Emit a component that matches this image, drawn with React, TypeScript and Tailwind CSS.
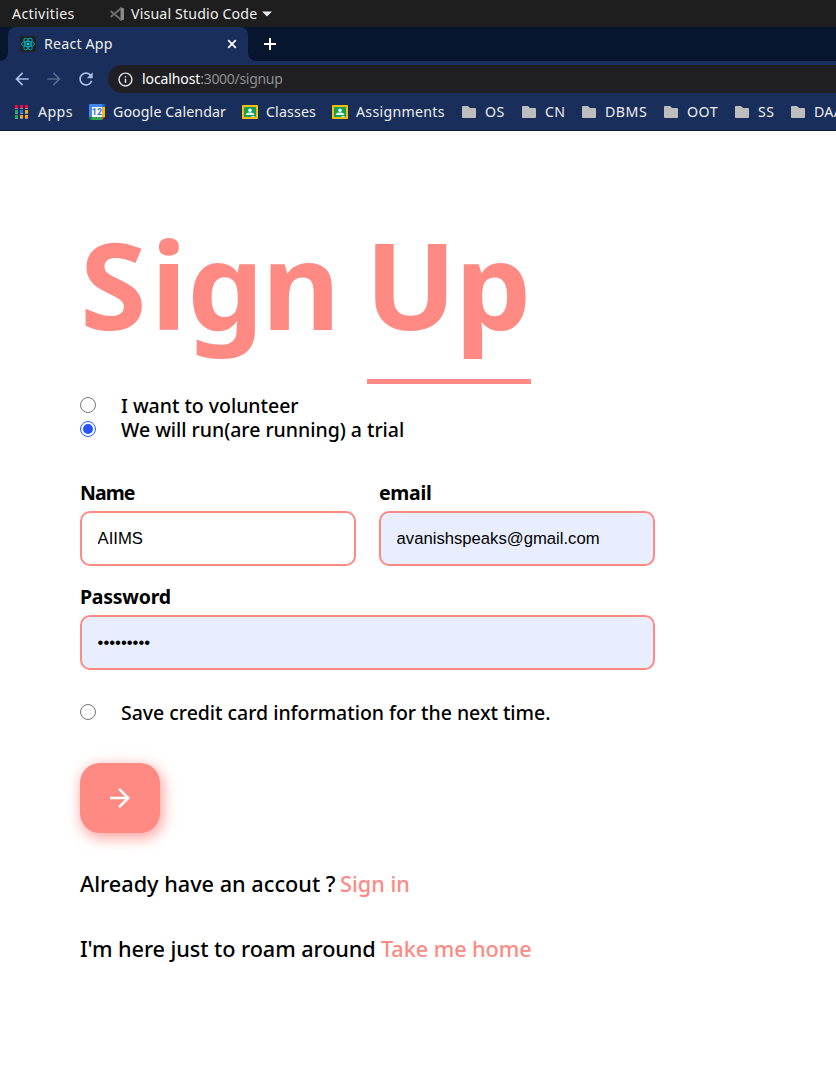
import type { ReactNode } from "react";
import { MdArrowForward, MdArrowBack, MdRefresh, MdInfoOutline } from "react-icons/md";

function AppsIcon() {
  const colors = ["#f5053c", "#f5053c", "#f5053c", "#14a860", "#1a73e8", "#fba900", "#14a860", "#fba900", "#fba900"];
  return (
    <svg width="16" height="16" viewBox="0 0 16 16" className="shrink-0" shapeRendering="crispEdges">
      {colors.map((c, i) => {
        const x = 1 + (i % 3) * 5;
        const y = 1 + Math.floor(i / 3) * 5;
        return (
          <g key={i}>
            <rect x={x} y={y} width="3" height="3" fill={c} />
            <rect x={x} y={y + 3} width="3" height="1" fill="#8b93a8" />
          </g>
        );
      })}
    </svg>
  );
}

function CodeIcon() {
  return (
    <svg width="16" height="16" viewBox="0 0 16 16" className="shrink-0">
      <path d="M11.5 1 15 2.6v10.8L11.5 15z" fill="#8a8a8a" />
      <path d="M1.6 5 11.8 13.6M1.6 11 11.8 2.4" stroke="#6c6c6c" strokeWidth="2" fill="none" />
    </svg>
  );
}

function ReactIcon() {
  return (
    <svg width="16" height="16" viewBox="0 0 16 16" className="shrink-0">
      <rect width="16" height="16" rx="1.5" fill="#222222" />
      <g fill="none" stroke="#00aebf" strokeWidth="0.95">
        <ellipse cx="8" cy="8" rx="6.5" ry="2.6" />
        <ellipse cx="8" cy="8" rx="6.5" ry="2.6" transform="rotate(60 8 8)" />
        <ellipse cx="8" cy="8" rx="6.5" ry="2.6" transform="rotate(120 8 8)" />
      </g>
      <circle cx="8" cy="8" r="1.3" fill="#00d8ff" />
    </svg>
  );
}

function CloseIcon() {
  return (
    <svg width="14" height="14" viewBox="0 0 14 14" className="shrink-0">
      <path d="M3.2 3.2l7.6 7.6M10.8 3.2l-7.6 7.6" stroke="#ffffff" strokeWidth="1.7" fill="none" />
    </svg>
  );
}

function PlusIcon() {
  return (
    <svg width="20" height="20" viewBox="0 0 20 20" className="shrink-0">
      <path d="M10 4v12M4 10h12" stroke="#ffffff" strokeWidth="2" fill="none" />
    </svg>
  );
}

function CalendarIcon() {
  return (
    <svg width="16" height="16" viewBox="0 0 16 16" className="shrink-0">
      <path d="M1 0h12v3H3v10H0V1a1 1 0 0 1 1-1z" fill="#4285f4" />
      <path d="M13 0h2a1 1 0 0 1 1 1v2h-3z" fill="#1967d2" />
      <path d="M13 3h3v10h-3z" fill="#fbbc04" />
      <path d="M3 13h10v3H3z" fill="#34a853" />
      <path d="M0 13h3v3H1a1 1 0 0 1-1-1z" fill="#188038" />
      <path d="M13 13h3l-3 3z" fill="#ea4335" />
      <path d="M3 3h10v10H3z" fill="#fff" />
      <text x="8" y="11.3" textAnchor="middle" fontSize="9" fontWeight="700" fill="#2f6fe4" fontFamily="Roboto, sans-serif">
        12
      </text>
    </svg>
  );
}

function ClassroomIcon() {
  return (
    <svg width="16" height="16" viewBox="0 0 16 16" className="shrink-0">
      <rect x="0" y="1" width="16" height="14" rx="0.8" fill="#fbbc04" />
      <rect x="2" y="3" width="12" height="10" fill="#0fa05a" />
      <circle cx="8" cy="6.3" r="1.7" fill="#fff" />
      <path d="M3.8 11v-.7C3.8 9 6 8.5 8 8.5s4.2.5 4.2 1.8v.7z" fill="#e2f4ea" />
      <rect x="9.5" y="12" width="3" height="1" fill="#f1f1f1" />
    </svg>
  );
}

function FolderIcon() {
  return (
    <svg width="16" height="16" viewBox="0 0 16 16" className="shrink-0">
      <path d="M2 2h5l2 2h5a1 1 0 0 1 1 1v8a1 1 0 0 1-1 1H2a1 1 0 0 1-1-1V3a1 1 0 0 1 1-1z" fill="#bdbdbd" />
    </svg>
  );
}

function Bookmark({ icon, className, children }: { icon: ReactNode; className: string; children: string }) {
  return (
    <div className={`flex shrink-0 items-center gap-2 whitespace-nowrap ${className}`}>
      {icon}
      <span>{children}</span>
    </div>
  );
}

function Radio({ checked = false }: { checked?: boolean }) {
  return (
    <svg width="16" height="16" viewBox="0 0 16 16" className="shrink-0">
      <circle cx="8" cy="8" r="7.5" fill="#fff" stroke={checked ? "#2563ff" : "#767676"} />
      {checked && <circle cx="8" cy="8" r="5" fill="#2a52ff" />}
    </svg>
  );
}

function Choice({ checked, children }: { checked?: boolean; children: string }) {
  return (
    <label className="flex h-6 items-center gap-[25px] whitespace-nowrap text-[19.5px] leading-6 font-medium">
      <Radio checked={checked} />
      <span className="pt-[2px] -tracking-[0.03px]">{children}</span>
    </label>
  );
}

const labelStyle = "block h-[31px] pt-px text-[19.5px] leading-6 font-bold";
const inputStyle =
  "block h-[55px] w-full rounded-[10px] border-2 border-[#ff8a84] px-[15.6px] font-['Liberation_Sans',sans-serif] text-[16.67px] text-black outline-none";

export default function App() {
  return (
    <div className="h-[1080px] w-[836px] overflow-hidden bg-white font-['Noto_Sans',sans-serif] text-black">
      <header className="text-[14.2px] leading-5 text-[#eeeeee]">
        <div className="flex h-[27px] items-center bg-[#1e1e1e] pl-3">
          <span className="w-[97px] tracking-[0.36px]">Activities</span>
          <CodeIcon />
          <span className="ml-[6px] tracking-[0.15px]">Visual Studio Code</span>
          <svg width="10" height="6" viewBox="0 0 10 6" className="ml-[5px]">
            <path d="M0 .5h10L5 5.5z" fill="#eeeeee" />
          </svg>
        </div>

        <div className="flex h-[34px] bg-[#192e5b]">
          <div className="w-2 rounded-br-lg bg-[#07152f]" />
          <div className="w-60 bg-[#07152f]">
            <div className="flex h-full items-center rounded-t-lg bg-[#192e5b] pr-[9px] pl-3">
              <ReactIcon />
              <span className="ml-2 grow tracking-[0.2px]">React App</span>
              <CloseIcon />
            </div>
          </div>
          <div className="flex grow items-center rounded-bl-lg bg-[#07152f] pl-3">
            <PlusIcon />
          </div>
        </div>

        <div className="flex h-9 items-center bg-[#192e5b] pl-3">
          <MdArrowBack size={20} color="#a9c0e6" />
          <MdArrowForward size={20} color="#53698f" className="ml-3" />
          <MdRefresh size={20} color="#a9c0e6" className="ml-3" />
          <div className="ml-3 flex h-7 grow items-center rounded-l-full bg-[#202024] pl-[9px] text-[14px]">
            <MdInfoOutline size={17} color="#e8eaed" />
            <span className="ml-[8px] -tracking-[0.1px] text-white">localhost</span>
            <span className="-tracking-[0.3px] text-[#8f8f93]">:3000/signup</span>
          </div>
        </div>

        <div className="flex h-[34px] items-center overflow-hidden border-b border-[#0b1a38] bg-[#192e5b] pb-1 pl-[13px]">
          <Bookmark icon={<AppsIcon />} className="w-[76px] pl-px tracking-[0.4px]">Apps</Bookmark>
          <Bookmark icon={<CalendarIcon />} className="w-[153px] tracking-[0.1px]">Google Calendar</Bookmark>
          <Bookmark icon={<ClassroomIcon />} className="w-[90px] tracking-[0.15px]">Classes</Bookmark>
          <Bookmark icon={<ClassroomIcon />} className="w-[129px] tracking-[0.28px]">Assignments</Bookmark>
          <Bookmark icon={<FolderIcon />} className="w-[60px] tracking-[0.5px]">OS</Bookmark>
          <Bookmark icon={<FolderIcon />} className="w-[60px] tracking-[0.3px]">CN</Bookmark>
          <Bookmark icon={<FolderIcon />} className="w-[82px] tracking-[0.5px]">DBMS</Bookmark>
          <Bookmark icon={<FolderIcon />} className="w-[71px] tracking-[0.5px]">OOT</Bookmark>
          <Bookmark icon={<FolderIcon />} className="w-[56px] tracking-[0.4px]">SS</Bookmark>
          <Bookmark icon={<FolderIcon />} className="w-[70px] tracking-[0.3px]">DAA</Bookmark>
        </div>
      </header>

      <main className="pt-[79px] pl-20">
        <h1 className="flex h-[174px] text-[121px] leading-[147px] font-bold text-[#ff8a84]">
          <span className="w-[287px]">
            <span className="tracking-[4px]">S</span>
            <span className="tracking-[0.5px]">i</span>
            <span className="-tracking-[2px]">gn</span>
          </span>
          <span className="w-[164px] border-b-[5px] border-[#ff8a84]">
            <span className="-ml-[2px] -tracking-[1.5px]">Up</span>
          </span>
        </h1>

        <div className="mt-[9px]">
          <Choice>I want to volunteer</Choice>
          <Choice checked>We will run(are running) a trial</Choice>
        </div>

        <form className="mt-[39px] w-[575px]">
          <div className="flex gap-[23px]">
            <div className="w-[276px]">
              <label className={`${labelStyle} -tracking-[0.9px]`}>Name</label>
              <input type="text" defaultValue="AIIMS" className={`${inputStyle} bg-white`} />
            </div>
            <div className="w-[276px]">
              <label className={`${labelStyle} -tracking-[0.3px]`}>email</label>
              <input type="text" defaultValue="avanishspeaks@gmail.com" className={`${inputStyle} bg-[#e8eefe]`} />
            </div>
          </div>
          <div className="mt-[18px]">
            <label className={`${labelStyle} -tracking-[0.25px]`}>Password</label>
            <input type="password" defaultValue="aiims2021" className={`${inputStyle} bg-[#e8eefe]`} />
          </div>
          <div className="mt-[30px]">
            <Choice>Save credit card information for the next time.</Choice>
          </div>
          <button
            type="button"
            className="mt-[39px] flex h-[70px] w-20 items-center justify-center rounded-[20px] bg-[#ff8a84] shadow-[2px_4px_14px_1px_rgba(255,138,132,0.8)]"
          >
            <MdArrowForward size={30} color="#ffffff" />
          </button>
        </form>

        <p className="mt-[37px] flex h-7 whitespace-nowrap text-[21.7px] leading-7 font-medium">
          <span className="w-[260px]">Already have an accout ?</span>
          <a className="text-[#ff8a84]">Sign in</a>
        </p>
        <p className="mt-[37px] flex h-7 whitespace-nowrap text-[21.7px] leading-7 font-medium">
          <span className="w-[301px] -tracking-[0.08px]">I'm here just to roam around</span>
          <a className="-tracking-[0.08px] text-[#ff8a84]">Take me home</a>
        </p>
      </main>
    </div>
  );
}
